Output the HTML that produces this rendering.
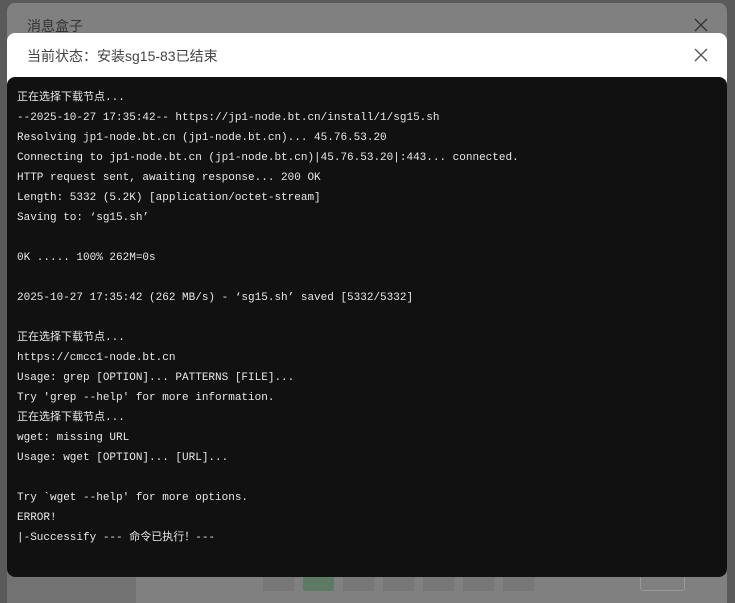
<!DOCTYPE html>
<html><head><meta charset="utf-8"><style>
body{margin:0;width:735px;height:603px;overflow:hidden;background:#5a5a5a;font-family:"Liberation Sans","Noto Sans CJK SC",sans-serif;position:relative}
.outer{position:absolute;left:7px;top:3px;width:720px;height:600px;background:#808080;border-radius:8px 8px 0 0}
.outer .t{position:absolute;left:20px;top:13px;font-size:14px;color:#333}
.x{position:absolute;width:14px;height:14px}
.pg{position:absolute;top:560px;width:31px;height:28px;background:#777;border-radius:2px}
.dlg{position:absolute;left:7px;top:33px;width:720px;height:544px;background:#fff;border-radius:8px}
.dlg .t{position:absolute;left:20px;top:13px;font-size:14px;color:#444}
.term{position:absolute;left:0;top:44px;width:720px;height:500px;background:#111;border-radius:8px;padding:11px 10px 0 10px;box-sizing:border-box;font-family:"Liberation Mono","Noto Sans CJK SC",monospace;font-size:11px;line-height:20px;color:#e8e8e8;white-space:pre}
</style></head><body>
<div class="outer"><div class="t">消息盒子</div>
<svg class="x" style="left:687px;top:15px" viewBox="0 0 14 14"><path d="M1 1L13 13M13 1L1 13" stroke="#333" stroke-width="1.3"/></svg>
<div style="position:absolute;left:0;top:560px;width:129px;height:40px;background:#727272"></div>
<div class="pg" style="left:256px"></div><div class="pg" style="left:296px;background:#5d7a62"></div><div class="pg" style="left:336px"></div><div class="pg" style="left:376px"></div><div class="pg" style="left:416px"></div><div class="pg" style="left:456px"></div><div class="pg" style="left:496px"></div>
<div style="position:absolute;left:633px;top:560px;width:45px;height:28px;border:1px solid #999;border-radius:3px;box-sizing:border-box"></div>
</div>
<div class="dlg"><div class="t">当前状态：安装sg15-83已结束</div>
<svg class="x" style="left:687px;top:15px" viewBox="0 0 14 14"><path d="M1 1L13 13M13 1L1 13" stroke="#555" stroke-width="1.3"/></svg>
<div class="term">正在选择下载节点...
--2025-10-27 17:35:42-- https://jp1-node.bt.cn/install/1/sg15.sh
Resolving jp1-node.bt.cn (jp1-node.bt.cn)... 45.76.53.20
Connecting to jp1-node.bt.cn (jp1-node.bt.cn)|45.76.53.20|:443... connected.
HTTP request sent, awaiting response... 200 OK
Length: 5332 (5.2K) [application/octet-stream]
Saving to: ‘sg15.sh’

0K ..... 100% 262M=0s

2025-10-27 17:35:42 (262 MB/s) - ‘sg15.sh’ saved [5332/5332]

正在选择下载节点...
https://cmcc1-node.bt.cn
Usage: grep [OPTION]... PATTERNS [FILE]...
Try 'grep --help' for more information.
正在选择下载节点...
wget: missing URL
Usage: wget [OPTION]... [URL]...

Try `wget --help' for more options.
ERROR!
|-Successify --- 命令已执行！---</div></div>
</body></html>
